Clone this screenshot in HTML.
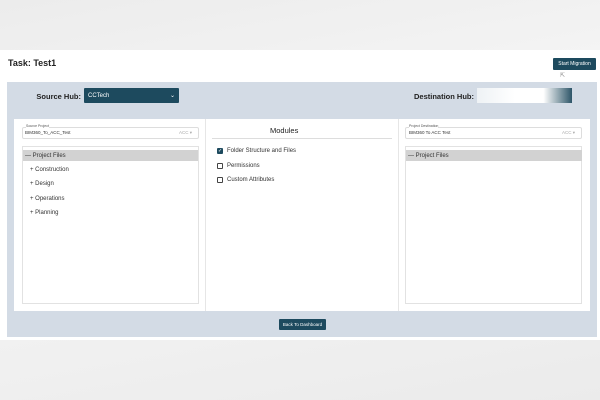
<!DOCTYPE html>
<html><head><style>
*{margin:0;padding:0;box-sizing:border-box}
body{width:600px;height:400px;overflow:hidden;background:linear-gradient(170deg,#ececec,#f6f6f6 40%,#ebebeb);font-family:"Liberation Sans",sans-serif;position:relative}
.a{position:absolute}
.btn{background:#1d4a5e;color:#fff;font-size:5px;display:flex;align-items:center;justify-content:center;border-radius:1px}
.sel{background:#fff;border:1px solid #ddd;border-radius:2px}
.t{font-size:6px;color:#333;white-space:nowrap}
.cb{width:6px;height:6px;border:1px solid #444;border-radius:1px}
.lbl{font-size:7.5px;font-weight:bold;color:#222;text-align:right;white-space:nowrap}
</style></head><body>
<div class="a" style="left:0;top:50px;width:600px;height:290px;background:#fff"></div>
<div class="a" style="left:8px;top:58px;font-size:9px;font-weight:bold;color:#222">Task: Test1</div>
<div class="a btn" style="left:553px;top:58px;width:43px;height:12px">Start Migration</div>
<div class="a" style="left:7px;top:82px;width:590px;height:255px;background:#d3dbe5"></div>
<div class="a lbl" style="left:0;width:81px;top:92px">Source Hub:</div>
<div class="a btn" style="left:84px;top:88px;width:95px;height:15px;justify-content:flex-start;padding-left:4px;font-size:6px">CCTech<span style="margin-left:auto;margin-right:4px">⌄</span></div>
<div class="a lbl" style="left:380px;width:94px;top:92px">Destination Hub:</div>
<div class="a" style="left:477px;top:88px;width:95px;height:15px;background:linear-gradient(90deg,#eef2f5,#fff 40%,#fff 70%,#2d5568)"></div>
<div class="a" style="left:14px;top:119px;width:576px;height:192px;background:#fff"></div>
<div class="a" style="left:205px;top:119px;width:1px;height:192px;background:#e6e6e6"></div>
<div class="a" style="left:398px;top:119px;width:1px;height:192px;background:#e6e6e6"></div>
<!-- left -->
<div class="a sel" style="left:22px;top:127px;width:177px;height:12px"></div>
<div class="a" style="left:26px;top:124px;font-size:3.5px;color:#555;background:#fff">Source Project</div>
<div class="a" style="left:25px;top:130px;font-size:4.5px;color:#333">BIM360_To_ACC_Test</div>
<div class="a" style="left:179px;top:130px;font-size:4.5px;color:#aaa">ACC ▾</div>
<div class="a" style="left:22px;top:146px;width:177px;height:158px;border:1px solid #e2e2e2"></div>
<div class="a" style="left:23px;top:150px;width:175px;height:11px;background:#d2d2d2"></div>
<div class="a t" style="left:25px;top:153px">— Project Files</div>
<div class="a t" style="left:30px;top:167px">+ Construction</div>
<div class="a t" style="left:30px;top:181px">+ Design</div>
<div class="a t" style="left:30px;top:196px">+ Operations</div>
<div class="a t" style="left:30px;top:210px">+ Planning</div>
<!-- mid -->
<div class="a" style="left:270px;top:126px;font-size:7.5px;color:#222">Modules</div>
<div class="a" style="left:212px;top:138px;width:180px;height:1px;background:#ddd"></div>
<div class="a cb" style="left:217px;top:148px;background:#1d4a5e;border-color:#1d4a5e;color:#fff;font-size:5px;line-height:4px;text-align:center">✓</div>
<div class="a t" style="left:227px;top:148px">Folder Structure and Files</div>
<div class="a cb" style="left:217px;top:163px"></div>
<div class="a t" style="left:227px;top:163px">Permissions</div>
<div class="a cb" style="left:217px;top:177px"></div>
<div class="a t" style="left:227px;top:177px">Custom Attributes</div>
<!-- right -->
<div class="a sel" style="left:405px;top:127px;width:177px;height:12px"></div>
<div class="a" style="left:409px;top:124px;font-size:3.5px;color:#555;background:#fff">Project Destination</div>
<div class="a" style="left:409px;top:130px;font-size:4.5px;color:#333">BIM360 To ACC Test</div>
<div class="a" style="left:562px;top:130px;font-size:4.5px;color:#aaa">ACC ▾</div>
<div class="a" style="left:405px;top:146px;width:177px;height:158px;border:1px solid #e2e2e2"></div>
<div class="a" style="left:406px;top:150px;width:176px;height:11px;background:#d2d2d2"></div>
<div class="a t" style="left:408px;top:153px">— Project Files</div>
<div class="a btn" style="left:279px;top:319px;width:47px;height:11px;font-size:4.5px">Back To Dashboard</div>
<div class="a" style="left:560px;top:72px;font-size:6px;color:#888">⇱</div>
</body></html>
